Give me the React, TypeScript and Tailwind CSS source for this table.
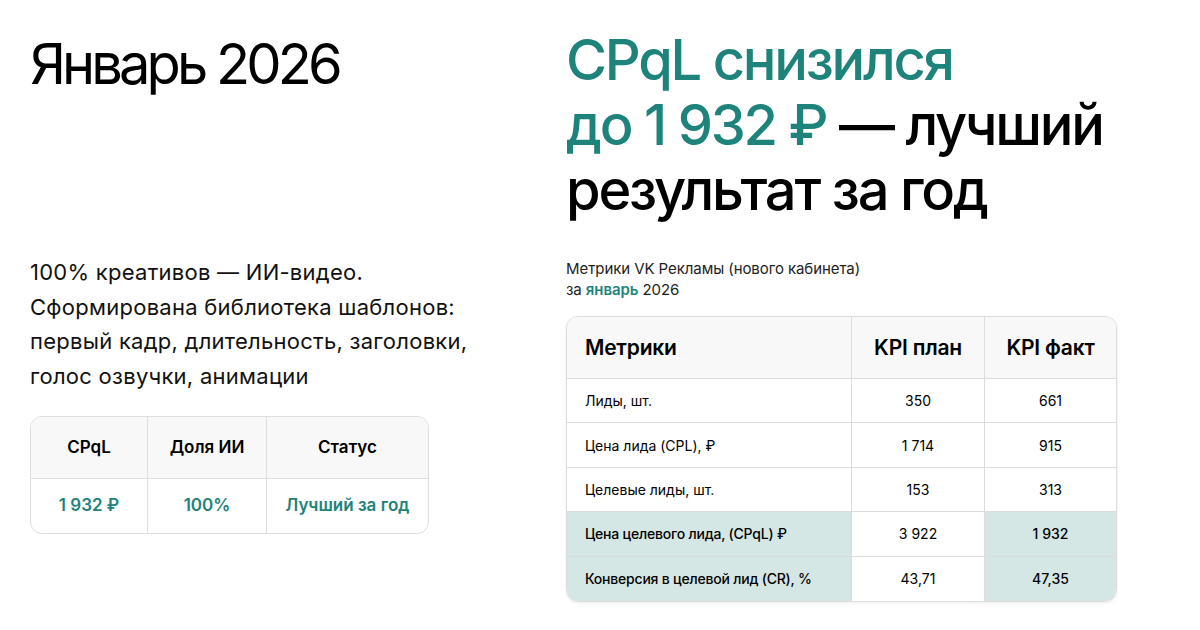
import React from "react";

const teal = "text-[#1e837b]";

export default function App() {
  const rows = [
    { m: "Лиды, шт.", p: "350", f: "661", hl: false },
    { m: "Цена лида (CPL), ₽", p: "1 714", f: "915", hl: false },
    { m: "Целевые лиды, шт.", p: "153", f: "313", hl: false },
    { m: "Цена целевого лида, (CPqL) ₽", p: "3 922", f: "1 932", hl: true },
    { m: "Конверсия в целевой лид (CR), %", p: "43,71", f: "47,35", hl: true },
  ];
  return (
    <div
      className="w-[1200px] h-[630px] bg-white text-black overflow-hidden flex"
      style={{ fontFamily: "Inter, 'Noto Sans', sans-serif" }}
    >
      {/* Left */}
      <div className="w-[566px] pl-[30px] pt-[29px] flex flex-col">
        <h1 className="text-[56px] leading-[70px] font-normal tracking-[-0.07em]">Январь 2026</h1>
        <p className="mt-[156px] text-[22px] leading-[34.5px] text-[#111] tracking-[0.012em]">
          100% креативов — ИИ-видео.
          <br />
          Сформирована библиотека шаблонов:
          <br />
          первый кадр, длительность, заголовки,
          <br />
          голос озвучки, анимации
        </p>
        <div className="mt-[23px] w-[399px] border border-[#dedede] rounded-[12px] overflow-hidden">
          <div className="grid grid-cols-[117px_119px_1fr] bg-[#f8f8f8] h-[62px] border-b border-[#dedede]">
            <div className="flex items-center justify-center text-[17px] font-semibold border-r border-[#dedede]">CPqL</div>
            <div className="flex items-center justify-center text-[17px] font-semibold border-r border-[#dedede]">Доля ИИ</div>
            <div className="flex items-center justify-center text-[17px] font-semibold">Статус</div>
          </div>
          <div className={`grid grid-cols-[117px_119px_1fr] h-[54px] ${teal}`}>
            <div className="flex items-center justify-center text-[17px] font-semibold border-r border-[#dedede]">1 932 ₽</div>
            <div className="flex items-center justify-center text-[17px] font-semibold border-r border-[#dedede]">100%</div>
            <div className="flex items-center justify-center text-[17px] font-semibold">Лучший за год</div>
          </div>
        </div>
      </div>

      {/* Right */}
      <div className="flex-1 pt-[28px] flex flex-col">
        <h2 className="text-[56px] leading-[65px] font-medium tracking-[-0.04em]">
          <span className={teal}>CPqL снизился</span>
          <br />
          <span className={teal}>до 1 932 ₽</span> — лучший
          <br />
          результат за год
        </h2>
        <div className="mt-[35px] text-[15px] leading-[21px] text-[#222] tracking-[-0.005em]">
          Метрики VK Рекламы (нового кабинета)
          <br />
          за <span className={`${teal} font-semibold`}>январь</span> 2026
        </div>
        <div className="mt-[16px] w-[551px] border border-[#dcdcdc] rounded-[12px] overflow-hidden shadow-[0_1px_3px_rgba(0,0,0,0.08)]">
          <div className="grid grid-cols-[285px_133px_1fr] h-[62px] bg-[#f8f8f8] border-b border-[#dcdcdc] text-[21px] font-semibold tracking-[-0.01em]">
            <div className="flex items-center pl-[18px] border-r border-[#dcdcdc]">Метрики</div>
            <div className="flex items-center justify-center border-r border-[#dcdcdc]">KPI план</div>
            <div className="flex items-center justify-center">KPI факт</div>
          </div>
          {rows.map((r, i) => (
            <div
              key={i}
              className={`grid grid-cols-[285px_133px_1fr] h-[44.4px] text-[14px] ${i < rows.length - 1 ? "border-b border-[#dcdcdc]" : ""}`}
            >
              <div className={`flex items-center pl-[18px] border-r border-[#dcdcdc] ${r.hl ? "bg-[#d5e7e5] font-medium tracking-[-0.015em]" : ""}`}>{r.m}</div>
              <div className="flex items-center justify-center border-r border-[#dcdcdc]">{r.p}</div>
              <div className={`flex items-center justify-center ${r.hl ? "bg-[#d5e7e5] font-medium" : ""}`}>{r.f}</div>
            </div>
          ))}
        </div>
      </div>
    </div>
  );
}
